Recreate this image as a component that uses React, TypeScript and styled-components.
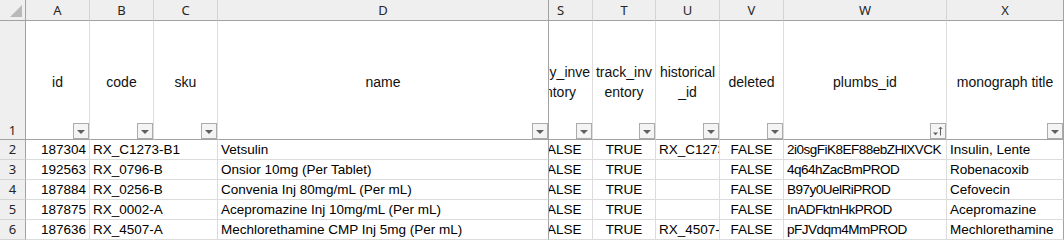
import React from "react";
import styled, { createGlobalStyle, css } from "styled-components";

const GlobalStyle = createGlobalStyle`
  html, body {
    margin: 0;
    padding: 0;
    background: #ffffff;
  }
  body {
    font-family: "Liberation Sans", Arial, sans-serif;
  }
`;

const CELL_FONT = `"Liberation Sans", Arial, sans-serif`;
const UI_FONT = `"Noto Sans", "Open Sans", "Liberation Sans", sans-serif`;

const GRID = "#dcdcdc";
const HEAD_GRID = "#d4d4d4";
const FREEZE = "#a2a2a2";

type Align = "left" | "right" | "center";

interface Column {
  letter: string;
  width: number;
  title: string[];
  align: Align;
  // partly scrolled under the frozen pane
  hidden?: number;
  tracking?: number;
  filter?: "plain" | "sorted";
}

const columns: Column[] = [
  { letter: "A", width: 64, title: ["id"], align: "right", filter: "plain" },
  { letter: "B", width: 64, title: ["code"], align: "left", filter: "plain" },
  { letter: "C", width: 64, title: ["sku"], align: "left", filter: "plain" },
  { letter: "D", width: 331, title: ["name"], align: "left", filter: "plain" },
  { letter: "S", width: 44, title: ["only_inve", "ntory"], align: "center", hidden: 20, filter: "plain" },
  { letter: "T", width: 63, title: ["track_inv", "entory"], align: "center", filter: "plain" },
  { letter: "U", width: 64, title: ["historical", "_id"], align: "left", filter: "plain" },
  { letter: "V", width: 64, title: ["deleted"], align: "center", filter: "plain" },
  { letter: "W", width: 163, title: ["plumbs_id"], align: "left", tracking: -0.5, filter: "sorted" },
  { letter: "X", width: 117, title: ["monograph title"], align: "left", filter: "plain" },
];

const rows: string[][] = [
  ["187304", "RX_C1273-B1", "", "Vetsulin", "FALSE", "TRUE", "RX_C1273-B1", "FALSE", "2i0sgFiK8EF88ebZHlXVCK", "Insulin, Lente"],
  ["192563", "RX_0796-B", "", "Onsior 10mg (Per Tablet)", "FALSE", "TRUE", "", "FALSE", "4q64hZacBmPROD", "Robenacoxib"],
  ["187884", "RX_0256-B", "", "Convenia Inj 80mg/mL (Per mL)", "FALSE", "TRUE", "", "FALSE", "B97y0UelRiPROD", "Cefovecin"],
  ["187875", "RX_0002-A", "", "Acepromazine Inj 10mg/mL (Per mL)", "FALSE", "TRUE", "", "FALSE", "InADFktnHkPROD", "Acepromazine"],
  ["187636", "RX_4507-A", "", "Mechlorethamine CMP Inj 5mg (Per mL)", "FALSE", "TRUE", "RX_4507-A1", "FALSE", "pFJVdqm4MmPROD", "Mechlorethamine"],
];

const FROZEN_AFTER = "D";

const Sheet = styled.div<{ $cols: string }>`
  display: grid;
  grid-template-columns: 26px ${(p) => p.$cols};
  grid-template-rows: 21px 119px repeat(5, 20px) 1px;
  width: 1064px;
  height: 241px;
  overflow: hidden;
  background: #ffffff;
`;

const Corner = styled.div`
  position: relative;
  background: #efefef;
  border-right: 1px solid ${FREEZE};
  border-bottom: 1px solid ${FREEZE};
  box-sizing: border-box;

  &::after {
    content: "";
    position: absolute;
    right: 3px;
    bottom: 3px;
    width: 0;
    height: 0;
    border-left: 12px solid transparent;
    border-bottom: 12px solid #b9b9b9;
  }
`;

const ColLetter = styled.div<{ $frozen?: boolean; $last?: boolean }>`
  box-sizing: border-box;
  background: #efefef;
  border-bottom: 1px solid ${FREEZE};
  border-right: 1px solid ${(p) => (p.$frozen || p.$last ? FREEZE : HEAD_GRID)};
  font-family: ${UI_FONT};
  font-size: 13px;
  color: #262626;
  overflow: hidden;
  line-height: 1;
`;

const RowNum = styled.div<{ $frozen?: boolean }>`
  box-sizing: border-box;
  background: #efefef;
  border-right: 1px solid ${FREEZE};
  border-bottom: 1px solid ${(p) => (p.$frozen ? FREEZE : HEAD_GRID)};
  font-family: ${UI_FONT};
  font-size: 13px;
  color: #262626;
  display: flex;
  justify-content: center;
  align-items: ${(p) => (p.$frozen ? "flex-end" : "center")};
  padding-bottom: ${(p) => (p.$frozen ? "2px" : "0")};
  line-height: 1;
`;

const cellBorders = css<{ $frozen?: boolean; $frozenRow?: boolean; $last?: boolean; $spill?: boolean }>`
  box-sizing: border-box;
  border-right: 1px solid
    ${(p) => (p.$frozen || p.$last ? FREEZE : p.$spill ? "transparent" : GRID)};
  border-bottom: 1px solid ${(p) => (p.$frozenRow ? FREEZE : GRID)};
`;

const HeadCell = styled.div<{ $frozen?: boolean; $frozenRow?: boolean; $last?: boolean }>`
  ${cellBorders};
  position: relative;
  overflow: hidden;
`;

// the content box of a column; a partly hidden column slides left under the pane
const Slide = styled.div<{ $hidden: number }>`
  height: 100%;
  margin-left: -${(p) => p.$hidden}px;
  width: calc(100% + ${(p) => p.$hidden}px);
  position: relative;
`;

const LetterSlide = styled(Slide)`
  display: flex;
  align-items: center;
  justify-content: center;
`;

const Title = styled.div`
  height: 100%;
  display: flex;
  flex-direction: column;
  align-items: center;
  justify-content: center;
  padding-top: 4px;
  box-sizing: border-box;
  font-family: ${CELL_FONT};
  font-size: 14px;
  line-height: 20px;
  color: #111;
  white-space: nowrap;
`;

const FilterButton = styled.span`
  position: absolute;
  right: 0;
  bottom: 0;
  width: 16px;
  height: 16px;
  box-sizing: border-box;
  border: 1px solid #ababab;
  background: #f4f4f4;
  display: flex;
  align-items: center;
  justify-content: center;
`;

const Arrow = styled.span`
  width: 0;
  height: 0;
  margin-top: 1px;
  border-left: 4px solid transparent;
  border-right: 4px solid transparent;
  border-top: 4px solid #5f5f5f;
`;

const Cell = styled.div<{ $frozen?: boolean; $last?: boolean; $spill?: boolean }>`
  ${cellBorders};
  overflow: ${(p) => (p.$spill ? "visible" : "hidden")};
`;

const CellText = styled.div<{ $align: Align; $tracking: number }>`
  height: 100%;
  display: flex;
  align-items: center;
  justify-content: ${(p) =>
    p.$align === "right" ? "flex-end" : p.$align === "center" ? "center" : "flex-start"};
  padding: 1px 3px 0;
  box-sizing: border-box;
  font-family: ${CELL_FONT};
  font-size: 13.5px;
  letter-spacing: ${(p) => p.$tracking}px;
  color: #000;
  white-space: nowrap;
  line-height: 1;
`;

const Filler = styled.div``;

const SortedIcon = () => (
  <svg width="12" height="12" viewBox="0 0 12 12">
    <path d="M1 7.5h5l-2.5 2.8z" fill="#5f5f5f" />
    <path d="M8.5 10.5V2.2M6.8 4l1.7-1.9L10.2 4" stroke="#5f5f5f" strokeWidth="1" fill="none" />
  </svg>
);

export default function App() {
  const frozenIndex = columns.findIndex((c) => c.letter === FROZEN_AFTER);
  const template = columns.map((c) => `${c.width}px`).join(" ");

  return (
    <>
      <GlobalStyle />
      <Sheet $cols={template}>
        <Corner />
        {columns.map((c, i) => (
          <ColLetter key={c.letter} $frozen={i === frozenIndex} $last={i === columns.length - 1}>
            <LetterSlide $hidden={c.hidden ?? 0}>{c.letter}</LetterSlide>
          </ColLetter>
        ))}

        <RowNum $frozen>1</RowNum>
        {columns.map((c, i) => (
          <HeadCell key={c.letter} $frozen={i === frozenIndex} $frozenRow $last={i === columns.length - 1}>
            <Slide $hidden={c.hidden ?? 0}>
              <Title>
                {c.title.map((line) => (
                  <span key={line}>{line}</span>
                ))}
              </Title>
              {c.filter && (
                <FilterButton>{c.filter === "sorted" ? <SortedIcon /> : <Arrow />}</FilterButton>
              )}
            </Slide>
          </HeadCell>
        ))}

        {rows.map((row, r) => (
          <React.Fragment key={r}>
            <RowNum>{r + 2}</RowNum>
            {row.map((value, i) => {
              const c = columns[i];
              // left-aligned text runs on into an empty neighbour
              const spill =
                c.align === "left" && value !== "" && i < row.length - 1 && row[i + 1] === "" && i !== frozenIndex;
              return (
                <Cell
                  key={c.letter}
                  $frozen={i === frozenIndex}
                  $last={i === columns.length - 1}
                  $spill={spill}
                >
                  <Slide $hidden={c.hidden ?? 0}>
                    <CellText $align={c.align} $tracking={c.tracking ?? 0}>
                      {value}
                    </CellText>
                  </Slide>
                </Cell>
              );
            })}
          </React.Fragment>
        ))}
        <Filler />
      </Sheet>
    </>
  );
}
